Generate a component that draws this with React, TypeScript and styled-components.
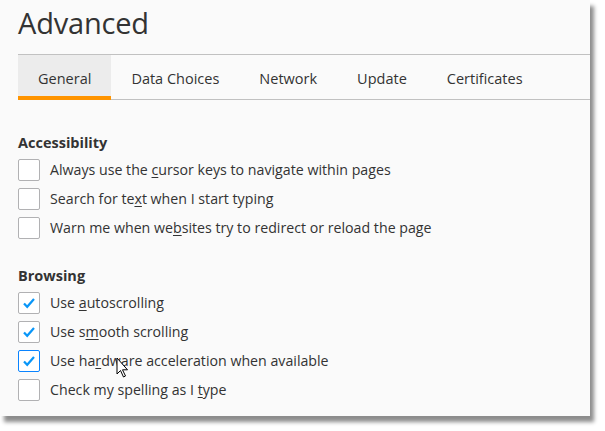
import styled, { createGlobalStyle } from 'styled-components';

const GlobalStyle = createGlobalStyle`
  html, body {
    margin: 0;
    padding: 0;
    background: #ffffff;
  }
  body {
    font-family: "Open Sans", "Noto Sans", sans-serif;
    color: #3b3b3f;
  }
`;

const Page = styled.div`
  width: 605px;
  height: 431px;
  background: #ffffff;
  overflow: hidden;
`;

const Panel = styled.div`
  position: relative;
  width: 590px;
  height: 416px;
  background: #fafafa;
  box-shadow: 4px 6px 4px rgba(0, 0, 0, 0.45);
  padding-left: 18px;
  box-sizing: border-box;
`;

const Title = styled.h1`
  margin: 0;
  padding-top: 3px;
  height: 51px;
  font-size: 29px;
  font-weight: 400;
  color: #333;
  letter-spacing: -0.2px;
`;

const TabBar = styled.div`
  display: flex;
  border-top: 1px solid #c1c1c1;
  border-bottom: 1px solid #c1c1c1;
  height: 44px;
`;

const Tab = styled.div<{ $active?: boolean }>`
  display: flex;
  align-items: center;
  padding: 0 20px;
  font-size: 14.5px;
  color: #333;
  background: ${(p) => (p.$active ? '#ececec' : 'transparent')};
  border-bottom: 4px solid ${(p) => (p.$active ? '#ff9400' : 'transparent')};
  margin-bottom: -1px;
  padding-top: 5px;
`;

const Section = styled.section`
  display: flex;
  flex-direction: column;
  margin-top: 33px;

  & + & {
    margin-top: 24px;
  }
`;

const Heading = styled.h2`
  margin: 0 0 2px;
  font-size: 14.5px;
  font-weight: 700;
  color: #333;
  line-height: 20px;
`;

const Row = styled.label`
  display: flex;
  align-items: center;
  gap: 10px;
  height: 29px;
  font-size: 14.2px;
  color: #333;
`;

const Box = styled.span<{ $focused?: boolean }>`
  width: 20px;
  height: 20px;
  border: 1px solid ${(p) => (p.$focused ? '#0a84ff' : '#b1b1b3')};
  border-radius: 2px;
  background: #fff;
  display: flex;
  align-items: center;
  justify-content: center;
  flex: none;
`;

const Key = styled.span`
  text-decoration: underline;
  text-underline-offset: 2px;
`;

const Cursor = styled.svg`
  position: absolute;
  left: 116px;
  top: 357px;
`;

const Check = () => (
  <svg width="14" height="12" viewBox="0 0 14 12">
    <path d="M2 6.5 L5.2 9.8 L12 2" fill="none" stroke="#0996f8" strokeWidth="2.2" />
  </svg>
);

type Item = { before: string; key: string; after: string; checked?: boolean; focused?: boolean };

const accessibility: Item[] = [
  { before: 'Always use the ', key: 'c', after: 'ursor keys to navigate within pages' },
  { before: 'Search for te', key: 'x', after: 't when I start typing' },
  { before: 'Warn me when we', key: 'b', after: 'sites try to redirect or reload the page' },
];

const browsing: Item[] = [
  { before: 'Use ', key: 'a', after: 'utoscrolling', checked: true },
  { before: 'Use s', key: 'm', after: 'ooth scrolling', checked: true },
  { before: 'Use ha', key: 'r', after: 'dware acceleration when available', checked: true, focused: true },
  { before: 'Check my spelling as I ', key: 't', after: 'ype' },
];

const tabs = ['General', 'Data Choices', 'Network', 'Update', 'Certificates'];

const Option = ({ item }: { item: Item }) => (
  <Row>
    <Box $focused={item.focused}>{item.checked && <Check />}</Box>
    <span>
      {item.before}
      <Key>{item.key}</Key>
      {item.after}
    </span>
  </Row>
);

export default function App() {
  return (
    <Page>
      <GlobalStyle />
      <Panel>
        <Title>Advanced</Title>
        <TabBar>
          {tabs.map((t, i) => (
            <Tab key={t} $active={i === 0}>
              {t}
            </Tab>
          ))}
        </TabBar>
        <Section>
          <Heading>Accessibility</Heading>
          {accessibility.map((it) => (
            <Option key={it.after} item={it} />
          ))}
        </Section>
        <Section>
          <Heading>Browsing</Heading>
          {browsing.map((it) => (
            <Option key={it.after} item={it} />
          ))}
        </Section>
        <Cursor width="13" height="22" viewBox="0 0 13 22">
          <path
            d="M1 1 L1 17 L4.5 13.5 L7.5 20 L9.5 19 L6.5 12.8 L11.5 12.8 Z"
            fill="#fff"
            stroke="#000"
            strokeWidth="1"
            strokeLinejoin="round"
          />
        </Cursor>
      </Panel>
    </Page>
  );
}
